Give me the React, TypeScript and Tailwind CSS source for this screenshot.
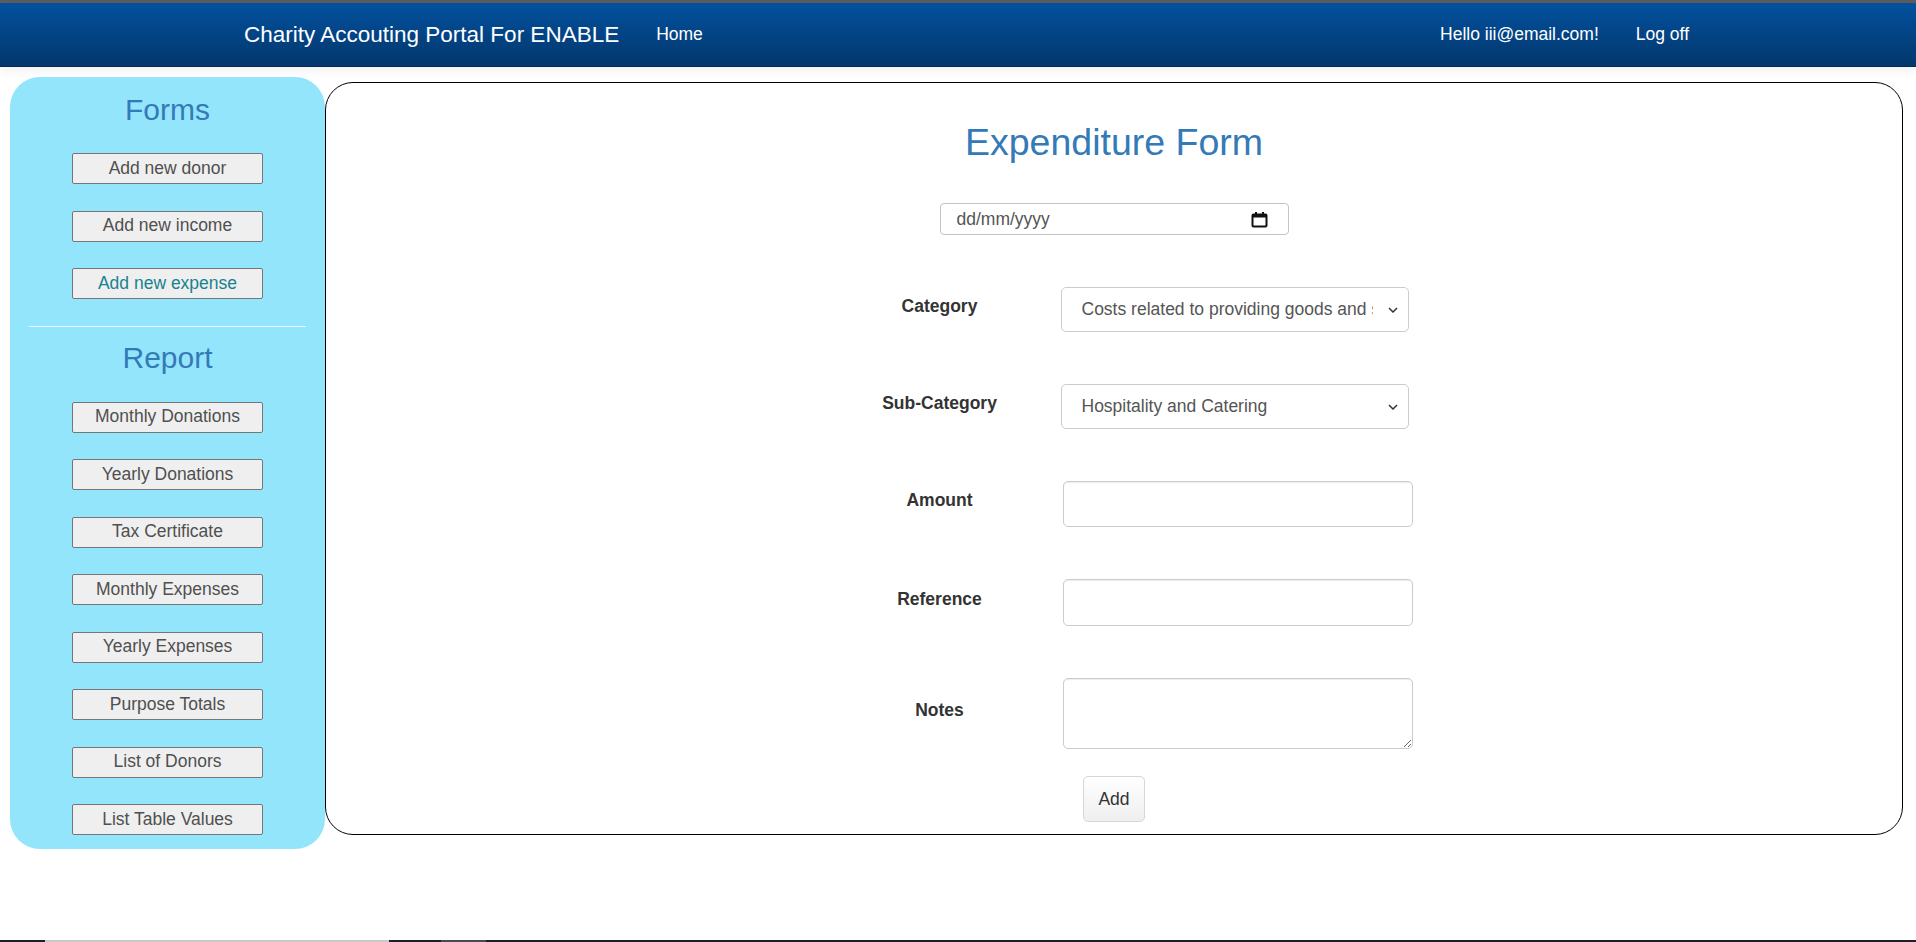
import React from 'react';

const formLinks = ['Add new donor', 'Add new income', 'Add new expense'];
const reportLinks = [
  'Monthly Donations',
  'Yearly Donations',
  'Tax Certificate',
  'Monthly Expenses',
  'Yearly Expenses',
  'Purpose Totals',
  'List of Donors',
  'List Table Values',
];

const SideButton: React.FC<{ label: string; active?: boolean }> = ({ label, active }) => (
  <button
    className={`h-[31px] w-[191px] rounded-[2px] border border-[#767676] bg-[#efefef] text-[17.5px] leading-none ${
      active ? 'text-[#17838f]' : 'text-[#505050]'
    }`}
  >
    {label}
  </button>
);

const Chevron = () => (
  <svg width="10" height="6" viewBox="0 0 10 6" className="shrink-0">
    <path d="M1 1l4 4 4-4" fill="none" stroke="#333" strokeWidth="1.5" />
  </svg>
);

const FormRow: React.FC<{ label: string; children: React.ReactNode }> = ({ label, children }) => (
  <div className="flex items-center">
    <label className="w-[160px] pb-[7px] text-center text-[17.5px] font-bold text-[#333]">{label}</label>
    <div className="ml-[41px]">{children}</div>
  </div>
);

const FakeSelect: React.FC<{ value: string }> = ({ value }) => (
  <div className="flex h-[45px] w-[348px] items-center rounded-[5px] border border-[#ccc] bg-white pl-[20px] pr-[10px]">
    <span className="w-[291px] overflow-hidden whitespace-nowrap text-[17.5px] text-[#555]">{value}</span>
    <span className="ml-auto">
      <Chevron />
    </span>
  </div>
);

export default function App() {
  return (
    <div className="flex min-h-screen flex-col bg-white font-['Liberation_Sans',Arial,sans-serif] text-[17.5px] text-[#333]">
      <div className="h-[3px] bg-[#5c5c5c]" />
      <nav className="flex h-[64px] items-center border-b border-[#022a55] bg-gradient-to-b from-[#02519e] to-[#03376d] text-white shadow-[0_4px_10px_rgba(0,0,0,0.06)]">
        <div className="flex items-center pl-[244px]">
          <span className="text-[22.5px]">Charity Accouting Portal For ENABLE</span>
          <span className="ml-[37px]">Home</span>
        </div>
        <div className="ml-auto flex items-center pr-[227px]">
          <span>Hello iii@email.com!</span>
          <span className="ml-[37px]">Log off</span>
        </div>
      </nav>

      <div className="flex items-start pl-[10px] pt-[10px]">
        <aside className="flex w-[315px] flex-col items-center rounded-[30px] bg-[#93e5fc] pb-[14px] pt-[16px]">
          <h3 className="text-[30px] leading-[33px] text-[#337ab7]">Forms</h3>
          <div className="mt-[27px] flex flex-col gap-[26.5px]">
            {formLinks.map((l) => (
              <SideButton key={l} label={l} active={l === 'Add new expense'} />
            ))}
          </div>
          <hr className="mt-[27px] w-[277px] border-t border-[#eef8fb]" />
          <h3 className="mt-[14px] text-[30px] leading-[33px] text-[#337ab7]">Report</h3>
          <div className="mt-[27.5px] flex flex-col gap-[26.5px]">
            {reportLinks.map((l) => (
              <SideButton key={l} label={l} />
            ))}
          </div>
        </aside>

        <main className="mt-[5px] flex w-[1578px] flex-col items-center rounded-[28px] border border-black pb-[12px] pt-[39px]">
          <h2 className="text-[37.5px] leading-[41px] text-[#337ab7]">Expenditure Form</h2>

          <div className="mt-[40px] flex h-[32px] w-[349px] items-center rounded-[4px] border border-[#c4c4c4] pl-[16px] pr-[20px]">
            <span className="text-[17.5px] text-[#555]">dd/mm/yyyy</span>
            <svg width="17" height="17" viewBox="0 0 17 17" className="ml-auto">
              <rect x="1.5" y="3.5" width="14" height="12" rx="1" fill="none" stroke="#111" strokeWidth="2" />
              <rect x="1.5" y="3.5" width="14" height="3" fill="#111" />
              <rect x="4" y="1" width="2" height="3" fill="#111" />
              <rect x="11" y="1" width="2" height="3" fill="#111" />
            </svg>
          </div>

          <div className="ml-[44px] mt-[52px] flex flex-col gap-[52px]">
            <FormRow label="Category">
              <FakeSelect value="Costs related to providing goods and services" />
            </FormRow>
            <FormRow label="Sub-Category">
              <FakeSelect value="Hospitality and Catering" />
            </FormRow>
            <FormRow label="Amount">
              <input
                type="text"
                className="ml-[2px] h-[46px] w-[350px] rounded-[5px] border border-[#ccc] px-[15px] shadow-[inset_0_1px_1px_rgba(0,0,0,0.075)] outline-none"
              />
            </FormRow>
            <FormRow label="Reference">
              <input
                type="text"
                className="ml-[2px] h-[47px] w-[350px] rounded-[5px] border border-[#ccc] px-[15px] shadow-[inset_0_1px_1px_rgba(0,0,0,0.075)] outline-none"
              />
            </FormRow>
            <FormRow label="Notes">
              <textarea className="ml-[2px] block h-[71px] w-[350px] rounded-[5px] border border-[#ccc] px-[15px] shadow-[inset_0_1px_1px_rgba(0,0,0,0.075)] outline-none" />
            </FormRow>
          </div>

          <button className="mt-[27px] h-[46px] w-[62px] rounded-[5px] border border-[#d6d6d6] bg-gradient-to-b from-white to-[#efefef] text-[17.5px] text-[#333]">
            Add
          </button>
        </main>
      </div>

      <div className="mt-auto flex h-[2px] bg-[#1e1e2a]">
        <div className="ml-[45px] w-[344px] bg-[#c8c8c8]" />
        <div className="ml-[52px] w-[45px] bg-[#4a4a55]" />
      </div>
    </div>
  );
}
